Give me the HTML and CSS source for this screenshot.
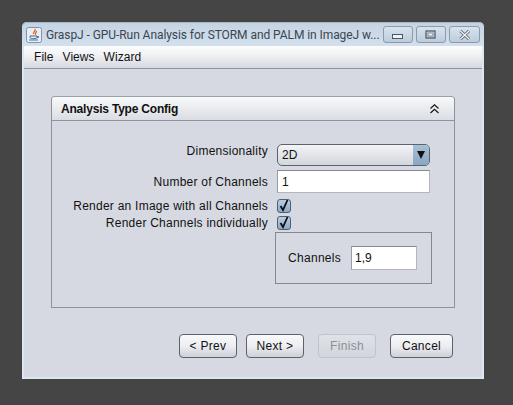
FILE: index.html
```html
<!DOCTYPE html>
<html lang="en">
<head>
  <meta charset="UTF-8" />
  <title>GraspJ</title>
  <link rel="stylesheet" href="styles.css">
</head>
<body>
  <div class="window">
    <div class="titlebar">
      <svg class="app-icon" width="16" height="16" viewBox="0 0 16 16">
        <rect x="0.5" y="0.5" width="15" height="15" rx="2" fill="#e8eef6" stroke="#7f93ad"/>
        <path d="M9 2C10 4 7 5 7.500 7M10.500 4C10 6 9 6.500 9.500 8" fill="none" stroke="#e2661a" stroke-width="1.300"/>
        <path d="M4 9H11V10.500C11 12 5 12 4 10.500ZM11 9.500H12.500V10.500H11M3 13H12" fill="none" stroke="#4a6c92"/>
      </svg>
      <span class="title-text">GraspJ - GPU-Run Analysis for STORM and PALM in ImageJ w...</span>
      <div class="win-buttons">
        <div class="win-btn win-btn-min">
          <svg width="12" height="6" viewBox="0 0 12 6"><rect x="0.5" y="0.5" width="10" height="4" fill="#eef1f5" stroke="#4c5560"/></svg>
        </div>
        <div class="win-btn">
          <svg width="12" height="10" viewBox="0 0 12 10"><rect x="1" y="1" width="9" height="7" fill="none" stroke="#4c5560" stroke-width="1.200"/><rect x="3" y="3" width="5" height="3" fill="#eef1f5" stroke="#4c5560" stroke-width="0.600"/></svg>
        </div>
        <div class="win-btn win-btn-close">
          <svg width="14" height="10" viewBox="0 0 14 10"><path d="M2.500 1L11 9M11 1L2.500 9" stroke="#59626e" stroke-width="3"/><path d="M2.500 1L11 9M11 1L2.500 9" stroke="#f3f5f8" stroke-width="1.300"/></svg>
        </div>
      </div>
    </div>

    <div class="menubar">
      <span>File</span>
      <span>Views</span>
      <span>Wizard</span>
    </div>

    <div class="content">
      <div class="panel">
        <div class="panel-header">
          <span>Analysis Type Config</span>
          <svg width="9" height="10" viewBox="0 0 9 10"><path d="M0.500 4.500L4.500 0.800L8.500 4.500M0.500 9L4.500 5.300L8.500 9" fill="none" stroke="#111" stroke-width="1.100"/></svg>
        </div>
        <div class="form">
          <div class="row row-combo">
            <label class="row-label">Dimensionality</label>
            <div class="combo">
              <span class="combo-value">2D</span>
              <span class="combo-arrow"></span>
            </div>
          </div>
          <div class="row row-field">
            <label class="row-label">Number of Channels</label>
            <div class="textfield">1</div>
          </div>
          <div class="row row-check">
            <label class="row-label">Render an Image with all Channels</label>
            <span class="check"><svg width="12" height="13" viewBox="0 0 12 13"><path d="M2.500 7L5 11L9.500 1" fill="none" stroke="#0c0f14" stroke-width="1.800"/></svg></span>
          </div>
          <div class="row row-check">
            <label class="row-label">Render Channels individually</label>
            <span class="check"><svg width="12" height="13" viewBox="0 0 12 13"><path d="M2.500 7L5 11L9.500 1" fill="none" stroke="#0c0f14" stroke-width="1.800"/></svg></span>
          </div>
          <div class="channels-box">
            <label>Channels</label>
            <div class="textfield textfield-small">1,9</div>
          </div>
        </div>
      </div>

      <div class="buttons">
        <button class="btn">&lt; Prev</button>
        <button class="btn">Next &gt;</button>
        <button class="btn btn-finish" disabled>Finish</button>
        <button class="btn btn-cancel">Cancel</button>
      </div>
    </div>
  </div>
</body>
</html>
```

FILE: styles.css
```css
* {
  box-sizing: border-box;
}

body {
  margin: 0;
  height: 405px;
  overflow: hidden;
  background-color: #454545;
  font-family: "Liberation Sans", Arial, sans-serif;
  font-size: 12px;
  color: #111;
}

.window {
  width: 462px;
  height: 357px;
  margin: 22px 0 0 22px;
  display: flex;
  flex-direction: column;
  padding: 0 2px 2px 2px;
  background: #dce7f2;
  border-radius: 5px 5px 0 0;
}

.titlebar {
  height: 24px;
  flex: none;
  display: flex;
  align-items: center;
  background: linear-gradient(#c5d3e3, #d3e0ec);
  margin: 0 -2px;
  padding: 0 4px 0 4px;
  border-radius: 5px 5px 0 0;
  border-top: 1px solid #a9b6c4;
}

.app-icon {
  flex: none;
}

.title-text {
  margin-left: 4px;
  color: #3b4650;
  white-space: nowrap;
  letter-spacing: -0.07px;
  font-family: Roboto, "Liberation Sans", sans-serif;
}

.win-buttons {
  margin-left: auto;
  display: flex;
  gap: 3px;
}

.win-btn {
  width: 30px;
  height: 17px;
  display: flex;
  align-items: center;
  justify-content: center;
  border: 1px solid #8a9bb0;
  border-radius: 3px;
  background: linear-gradient(#d8e3ee, #bccbdc);
}

.win-btn-close {
  width: 31px;
}

.win-btn-min svg {
  margin-top: 5px;
}

.menubar {
  height: 23px;
  flex: none;
  display: flex;
  align-items: center;
  gap: 9px;
  padding-left: 10px;
  letter-spacing: 0.05px;
  background: linear-gradient(#fbfcfd, #f3f4f6 35%, #d5d8de);
  border-bottom: 1px solid #8f96a1;
}

.content {
  flex: 1;
  display: flex;
  flex-direction: column;
  background: #d6d9e2;
  padding: 27px 27px 0 27px;
}

.panel {
  height: 212px;
  flex: none;
  border: 1px solid #8e939b;
  border-top-color: #9aa0a8;
  border-radius: 4px 4px 0 0;
}

.panel-header {
  height: 24px;
  display: flex;
  align-items: center;
  justify-content: space-between;
  padding: 0 15px 0 9px;
  font-weight: bold;
  letter-spacing: -0.2px;
  background: linear-gradient(#f8f9fa, #dadde3);
  border-bottom: 1px solid #8e939b;
  border-radius: 3px 3px 0 0;
}

.form {
  padding-top: 23px;
  padding-left: 225px;
}

.row {
  display: flex;
  position: relative;
  align-items: center;
  width: 153px;
}

.row-label {
  position: absolute;
  right: 162px;
  white-space: nowrap;
  letter-spacing: 0.24px;
}

.row-combo {
  height: 22px;
  margin-bottom: 4px;
}

.row-combo .row-label {
  top: 0;
}

.row-field {
  height: 23px;
  margin-bottom: 5px;
}

.row-check {
  height: 15px;
  margin-bottom: 2px;
}

.combo {
  width: 153px;
  height: 22px;
  display: flex;
  align-items: center;
  justify-content: space-between;
  border: 1px solid #5a6470;
  border-radius: 5px;
  background: linear-gradient(#f2f4f6, #d3d6dc);
  overflow: hidden;
}

.combo-value {
  padding-left: 4px;
}

.combo-arrow {
  width: 16px;
  height: 100%;
  display: flex;
  align-items: center;
  justify-content: center;
  background: linear-gradient(#a9c0d6, #8aa6c2);
}

.combo-arrow::after {
  content: "";
  border-left: 4px solid transparent;
  border-right: 4px solid transparent;
  border-top: 8px solid #111;
}

.textfield {
  width: 153px;
  height: 23px;
  padding-left: 4px;
  line-height: 22px;
  background: #fff;
  border: 1px solid #b3b6bc;
  border-top-color: #85888e;
  border-left-color: #9a9da3;
}

.check {
  width: 14px;
  height: 14px;
  display: flex;
  align-items: center;
  justify-content: center;
  border: 1px solid #4d5f73;
  border-radius: 3px;
  background: linear-gradient(#b9cde0, #8fa9c4);
}

.channels-box {
  width: 157px;
  height: 52px;
  margin-left: -2px;
  display: flex;
  align-items: center;
  gap: 10px;
  padding-left: 12px;
  border: 1px solid #84878d;
}

.channels-box label {
  letter-spacing: 0.3px;
}

.textfield-small {
  width: 66px;
  height: 24px;
  padding-left: 3px;
}

.buttons {
  display: flex;
  margin-top: 26px;
  padding-left: 128px;
}

.btn {
  width: 58px;
  height: 24px;
  padding: 0;
  font-family: inherit;
  font-size: 12px;
  letter-spacing: 0.3px;
  color: #111;
  border: 1px solid #5d6268;
  border-radius: 4px;
  background: linear-gradient(#f8f9fa, #eceef1 50%, #cdd0d6);
}

.btn + .btn {
  margin-left: 9px;
}

.btn-finish {
  margin-left: 14px !important;
  color: #8b8f96;
  border-color: #bfc3ca;
  background: linear-gradient(#dfe2e8, #d2d5dc);
}

.btn-cancel {
  width: 63px;
  margin-left: 14px !important;
}
```
